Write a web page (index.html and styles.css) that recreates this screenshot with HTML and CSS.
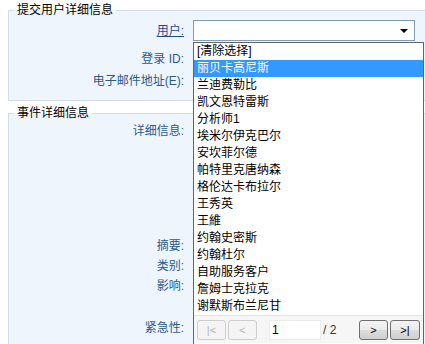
FILE: index.html
```html
<!DOCTYPE html>
<html lang="zh">

<head>
  <meta charset="UTF-8">
  <meta name="viewport" content="width=device-width, initial-scale=1.0">
  <title>提交事件</title>
  <link rel="stylesheet" href="styles.css">
</head>

<body>
  <div class="page">
    <fieldset class="group group_user">
      <legend>提交用户详细信息</legend>
      <div class="row row_select">
        <a class="label label_link" href="#">用户:</a>
        <div class="select"><span class="arrow"></span></div>
      </div>
      <div class="row row_login">
        <span class="label">登录 ID:</span>
      </div>
      <div class="row">
        <span class="label">电子邮件地址(E):</span>
      </div>
    </fieldset>

    <fieldset class="group group_event">
      <legend>事件详细信息</legend>
      <div class="row row_detail">
        <span class="label">详细信息:</span>
      </div>
      <div class="row row_short">
        <span class="label">摘要:</span>
      </div>
      <div class="row row_short">
        <span class="label">类别:</span>
      </div>
      <div class="row row_short row_impact">
        <span class="label">影响:</span>
      </div>
      <div class="row row_short">
        <span class="label">紧急性:</span>
      </div>
    </fieldset>

    <div class="dropdown">
      <ul class="options">
        <li>[清除选择]</li>
        <li class="selected">丽贝卡高尼斯</li>
        <li>兰迪费勒比</li>
        <li>凯文恩特雷斯</li>
        <li>分析师1</li>
        <li>埃米尔伊克巴尔</li>
        <li>安坎菲尔德</li>
        <li>帕特里克唐纳森</li>
        <li>格伦达卡布拉尔</li>
        <li>王秀英</li>
        <li>王維</li>
        <li>约翰史密斯</li>
        <li>约翰杜尔</li>
        <li>自助服务客户</li>
        <li>詹姆士克拉克</li>
        <li>谢默斯布兰尼甘</li>
      </ul>
      <div class="pager">
        <button type="button" class="page_btn" disabled="disabled">|&lt;</button>
        <button type="button" class="page_btn" disabled="disabled">&lt;</button>
        <input type="text" class="page_input" value="1">
        <span class="page_total">/ 2</span>
        <button type="button" class="page_btn page_next">&gt;</button>
        <button type="button" class="page_btn page_last">&gt;|</button>
      </div>
    </div>
  </div>
</body>

</html>
```

FILE: styles.css
```css
body {
  margin: 0;
  overflow: hidden;

  background-color: white;
  font-family: "Liberation Sans", "Noto Sans CJK SC", sans-serif;
  font-size: 12px;
}

.page {
  width: 440px;
  height: 344px;

  position: relative;
}

.group {
  margin: 0 0 0 8px;
  padding: 1px 0 8px 5px;

  border: 1px solid #d3dde7;
  background-color: #eef5fc;
}

.group legend {
  padding: 0 3px;

  line-height: 17px;
  color: black;
}

.group_user {
  margin-top: 2px;
}

.group_event {
  margin-top: 4px;
  padding-bottom: 20px;
}

.row {
  height: 22px;

  display: flex;
  align-items: center;
}

.row_select {
  height: 21px;
}

.row_login {
  margin-top: 7px;
}

.label {
  width: 170px;
  margin-right: 9px;

  text-align: right;
  color: #2a5b8c;
  line-height: 16px;
}

.label_link {
  color: #1d4b9c;
  text-decoration: underline;
}

.label_link .colon {
  text-decoration: none;
}

.select {
  width: 222px;
  height: 21px;

  display: flex;
  justify-content: flex-end;
  align-items: center;

  box-sizing: border-box;
  border: 1px solid #7f9db9;
  background-color: white;
}

.arrow {
  width: 0;
  height: 0;

  margin-right: 6px;
  margin-top: 1px;

  border-left: 4px solid transparent;
  border-right: 4px solid transparent;
  border-top: 4px solid black;
}

.row_detail {
  height: 113px;
  align-items: flex-start;
}

.row_short {
  height: 20px;
}

.row_impact {
  margin-bottom: 22px;
}

.dropdown {
  width: 229px;
  height: 301px;

  position: absolute;
  left: 193px;
  top: 40px;

  display: flex;
  flex-direction: column;

  border: 1px solid #646464;
  background-color: white;
}

.options {
  height: 272px;

  margin: 0;
  padding: 0;
  list-style: none;
}

.options li {
  height: 17px;

  padding-left: 3px;
  line-height: 17px;
  color: black;
  white-space: nowrap;
}

.options .selected {
  background-color: #3399ff;
  color: white;
}

.pager {
  height: 28px;

  display: flex;
  align-items: flex-start;

  padding: 4px 3px 0 3px;
  box-sizing: border-box;
  border-top: 1px solid #e4e4e4;
  background-color: #f6f6f6;
}

.page_btn {
  width: 29px;
  height: 20px;

  margin: 0 2px 0 0;
  padding: 0;

  font-family: "Liberation Sans", sans-serif;
  font-size: 11px;
  color: #b4b4b4;
  border: 1px solid #cdcdcd;
  border-radius: 3px;
  background-color: #f4f4f4;
}

.page_next {
  margin-left: auto;
}

.page_last {
  width: 30px;
  margin-right: 0;
}

.page_next,
.page_last {
  color: black;
  border-color: #707070;
  background: linear-gradient(#f3f3f3, #ebebeb 50%, #dddddd 50%, #cfcfcf);
}

.page_input {
  width: 52px;
  height: 20px;

  margin-left: 10px;
  padding: 0 0 0 2px;

  box-sizing: border-box;
  font-family: "Liberation Sans", sans-serif;
  font-size: 12px;
  border: 1px solid #ececec;
  background-color: white;
}

.page_total {
  margin-left: 2px;

  line-height: 20px;
  color: #333333;
  font-family: "Liberation Sans", sans-serif;
}
```
